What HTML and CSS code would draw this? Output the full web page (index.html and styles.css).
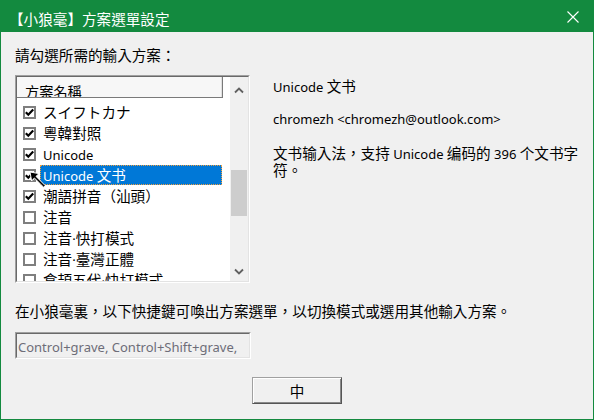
FILE: index.html
```html
<!DOCTYPE html>
<html lang="zh-Hant">
<head>
<meta charset="utf-8">
<title>【小狼毫】方案選單設定</title>
<link rel="stylesheet" href="styles.css">
</head>
<body>
<div class="window">
  <div class="titlebar">
    <span class="title">【小狼毫】方案選單設定</span>
    <svg class="close" width="12" height="12" viewBox="0 0 12 12"><path d="M0.5 0.5L11.5 11.5M11.5 0.5L0.5 11.5" stroke="#fff" stroke-width="1.1" fill="none"/></svg>
  </div>
  <div class="content">
    <div class="prompt">請勾選所需的輸入方案：</div>
    <div class="main">
      <div class="listbox">
        <div class="lb-frame">
          <div class="listview">
            <div class="header"><span>方案名稱</span></div>
            <div class="rows">
              <div class="row"><svg class="cb" width="13" height="13" viewBox="0 0 13 13"><rect x="1" y="1" width="11" height="11" fill="#fff" stroke="#7f7f7f" stroke-width="2"/><path d="M2.8 6.2L5.3 8.7L10.2 3.6" stroke="#000" stroke-width="2.2" fill="none"/></svg><span class="label">スイフトカナ</span></div>
              <div class="row"><svg class="cb" width="13" height="13" viewBox="0 0 13 13"><rect x="1" y="1" width="11" height="11" fill="#fff" stroke="#7f7f7f" stroke-width="2"/><path d="M2.8 6.2L5.3 8.7L10.2 3.6" stroke="#000" stroke-width="2.2" fill="none"/></svg><span class="label">粵韓對照</span></div>
              <div class="row"><svg class="cb" width="13" height="13" viewBox="0 0 13 13"><rect x="1" y="1" width="11" height="11" fill="#fff" stroke="#7f7f7f" stroke-width="2"/><path d="M2.8 6.2L5.3 8.7L10.2 3.6" stroke="#000" stroke-width="2.2" fill="none"/></svg><span class="label"><span class="lat">Unicode</span></span></div>
              <div class="row selected"><svg class="cb" width="13" height="13" viewBox="0 0 13 13"><rect x="1" y="1" width="11" height="11" fill="#fff" stroke="#7f7f7f" stroke-width="2"/><path d="M2.8 6.2L5.3 8.7L10.2 3.6" stroke="#000" stroke-width="2.2" fill="none"/></svg><span class="label"><span class="lat">Unicode </span>文书</span></div>
              <div class="row"><svg class="cb" width="13" height="13" viewBox="0 0 13 13"><rect x="1" y="1" width="11" height="11" fill="#fff" stroke="#7f7f7f" stroke-width="2"/><path d="M2.8 6.2L5.3 8.7L10.2 3.6" stroke="#000" stroke-width="2.2" fill="none"/></svg><span class="label">潮語拼音（汕頭）</span></div>
              <div class="row"><svg class="cb" width="13" height="13" viewBox="0 0 13 13"><rect x="1" y="1" width="11" height="11" fill="#fff" stroke="#7f7f7f" stroke-width="2"/></svg><span class="label">注音</span></div>
              <div class="row"><svg class="cb" width="13" height="13" viewBox="0 0 13 13"><rect x="1" y="1" width="11" height="11" fill="#fff" stroke="#7f7f7f" stroke-width="2"/></svg><span class="label">注音<span class="lat">·</span>快打模式</span></div>
              <div class="row"><svg class="cb" width="13" height="13" viewBox="0 0 13 13"><rect x="1" y="1" width="11" height="11" fill="#fff" stroke="#7f7f7f" stroke-width="2"/></svg><span class="label">注音<span class="lat">·</span>臺灣正體</span></div>
              <div class="row"><svg class="cb" width="13" height="13" viewBox="0 0 13 13"><rect x="1" y="1" width="11" height="11" fill="#fff" stroke="#7f7f7f" stroke-width="2"/></svg><span class="label">倉頡五代<span class="lat">·</span>快打模式</span></div>
            </div>
          </div>
          <div class="scrollbar">
            <div class="sb-btn up"><svg width="10" height="7" viewBox="0 0 10 7"><path d="M1 5.5L5 1.5L9 5.5" stroke="#606060" stroke-width="1.8" fill="none"/></svg></div>
            <div class="sb-track"><div class="sb-thumb"></div></div>
            <div class="sb-btn down"><svg width="10" height="7" viewBox="0 0 10 7"><path d="M1 1.5L5 5.5L9 1.5" stroke="#606060" stroke-width="1.8" fill="none"/></svg></div>
          </div>
        </div>
      </div>
      <div class="info">
        <div class="info-name"><span class="lat">Unicode </span>文书</div>
        <div class="info-author"><span class="lat">chromezh &lt;chromezh@outlook.com&gt;</span></div>
        <div class="info-desc">文书输入法，支持<span class="lat"> Unicode </span>编码的<span class="lat"> 396 </span>个文书字<br>符。</div>
      </div>
    </div>
    <div class="hint">在小狼毫裏，以下快捷鍵可喚出方案選單，以切換模式或選用其他輸入方案。</div>
    <div class="hotkeys"><div class="hk-inner"><span class="lat">Control+grave, Control+Shift+grave,</span></div></div>
    <div class="actions"><button class="btn" type="button">中</button></div>
  </div>
  <svg class="cursor" width="18" height="18" viewBox="0 0 18 18">
    <path d="M1 1L10 2.6L7 5.4L16.2 14.6L14.6 16.2L5.4 7L2.6 10Z" fill="#000" stroke="#fff" stroke-width="1" stroke-linejoin="miter"/>
  </svg>
</div>
</body>
</html>
```

FILE: styles.css
```css
html, body {
  margin: 0;
  padding: 0;
}

body {
  width: 594px;
  height: 420px;
  overflow: hidden;
  background: #f0f0f0;
  color: #000;
  font-family: "Noto Sans CJK TC", "Noto Sans CJK SC", sans-serif;
  font-size: 14.6px;
}

.lat {
  font-family: "Noto Sans", "Noto Sans CJK TC", sans-serif;
  font-size: 13px;
}

.window {
  position: relative;
  box-sizing: border-box;
  width: 594px;
  height: 420px;
  border: 1px solid #138a3f;
  border-top: 0;
  display: flex;
  flex-direction: column;
  background: #f0f0f0;
}

.titlebar {
  flex: none;
  height: 32px;
  background: #138a3f;
  color: #fff;
  display: flex;
  align-items: center;
  justify-content: space-between;
  padding: 0 14px 0 8px;
}

.title {
  font-size: 14.6px;
  line-height: 20px;
  padding-top: 6px;
}

.close {
  display: block;
  margin-top: 1px;
}

.content {
  padding: 0 14px;
  display: flex;
  flex-direction: column;
}

.prompt {
  margin-top: 13px;
  line-height: 20px;
}

.main {
  margin-top: 10px;
  display: flex;
  gap: 23px;
}

.listbox {
  flex: none;
  box-sizing: border-box;
  width: 235px;
  height: 208px;
  display: flex;
  border: 1px solid;
  border-color: #a0a0a0 #ffffff #ffffff #a0a0a0;
}

.lb-frame {
  flex: 1;
  display: flex;
  border: 1px solid;
  border-color: #696969 #e3e3e3 #e3e3e3 #696969;
  background: #fff;
  overflow: hidden;
}

.listview {
  flex: 1;
  overflow: hidden;
}

.header {
  box-sizing: border-box;
  width: 206px;
  height: 21px;
  padding: 5px 0 0 8px;
  background: #f7f7f7;
  border-right: 1px solid #7a7a7a;
  border-bottom: 1px solid #7a7a7a;
  box-shadow: inset -1px 0 #e0e0e0;
  font-size: 14.2px;
  line-height: 18px;
  overflow: hidden;
  white-space: nowrap;
}

.rows {
  padding-top: 3px;
}

.row {
  display: flex;
  align-items: flex-start;
  height: 21px;
}

.cb {
  flex: none;
  display: block;
  margin: 5px 4px 0 6px;
}

.label {
  box-sizing: border-box;
  width: 182px;
  height: 20px;
  margin-top: 1px;
  padding-left: 3px;
  line-height: 20px;
  white-space: nowrap;
}

.row.selected .label {
  background: #0078d7;
  color: #fff;
  outline: 1px dotted #f0a040;
  outline-offset: -1px;
}

.scrollbar {
  flex: none;
  width: 18px;
  display: flex;
  flex-direction: column;
  background: #f0f0f0;
}

.sb-btn {
  height: 20px;
  display: flex;
  align-items: center;
  justify-content: center;
}

.sb-btn svg {
  display: block;
}

.sb-btn.up {
  padding-top: 3px;
}

.sb-track {
  flex: 1;
}

.sb-thumb {
  margin: 70px 1px 0 1px;
  height: 46px;
  background: #cdcdcd;
}

.info {
  padding-top: 1px;
}

.info-name {
  line-height: 20px;
}

.info-author {
  margin-top: 11px;
  line-height: 20px;
}

.info-desc {
  margin-top: 16px;
  line-height: 16px;
}

.hint {
  margin-top: 18px;
  line-height: 20px;
  white-space: nowrap;
}

.hotkeys {
  margin-top: 11px;
  box-sizing: border-box;
  width: 236px;
  height: 27px;
  border: 1px solid;
  border-color: #a0a0a0 #ffffff #ffffff #a0a0a0;
  display: flex;
}

.hk-inner {
  flex: 1;
  border: 1px solid;
  border-color: #696969 #e3e3e3 #e3e3e3 #696969;
  background: #f0f0f0;
  color: #6d6d78;
  padding-left: 1px;
  line-height: 23px;
  white-space: nowrap;
  overflow: hidden;
}

.actions {
  margin-top: 18px;
  display: flex;
  justify-content: center;
}

.btn {
  box-sizing: border-box;
  width: 90px;
  height: 27px;
  padding: 0;
  font-family: inherit;
  font-size: 14.6px;
  color: #000;
  background: #f0f0f0;
  border: 1px solid;
  border-color: #a0a0a0 #555555 #555555 #a0a0a0;
  box-shadow: inset 1px 1px #ffffff, inset -1px -1px #8a8a8a;
  border-radius: 0;
}

.cursor {
  position: absolute;
  left: 28px;
  top: 171px;
}
```
